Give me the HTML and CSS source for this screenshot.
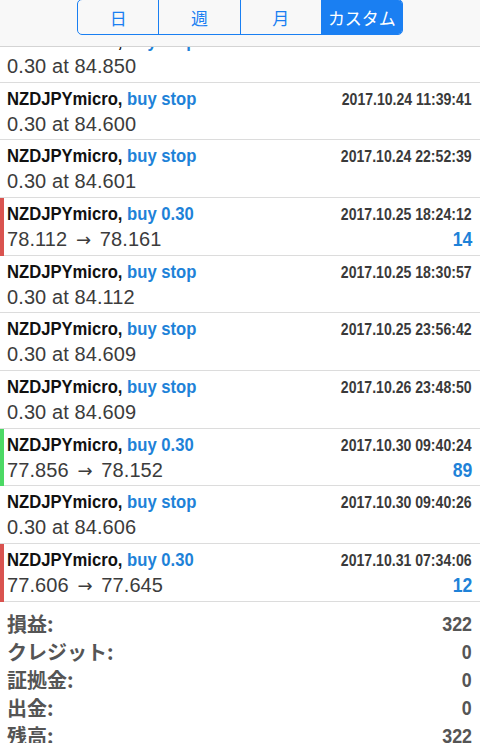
FILE: index.html
```html
<!DOCTYPE html>
<html lang="ja">
<head>
    <meta charset="UTF-8">
    <meta name="viewport" content="width=device-width, initial-scale=1">
    <title>履歴</title>
    <link rel="stylesheet" href="styles.css">
</head>

<body>
    <div class="topbar">
        <div class="segments">
            <span class="seg">日</span>
            <span class="seg">週</span>
            <span class="seg">月</span>
            <span class="seg active">カスタム</span>
        </div>
    </div>

    <div class="list">
        <div class="row">
            <div class="line"><span class="sym">NZDJPYmicro, <span class="op">buy stop</span></span><span class="time">2017.10.24 09:12:30</span></div>
            <div class="line"><span class="sub">0.30 at 84.850</span></div>
        </div>
        <div class="row">
            <div class="line"><span class="sym">NZDJPYmicro, <span class="op">buy stop</span></span><span class="time">2017.10.24 11:39:41</span></div>
            <div class="line"><span class="sub">0.30 at 84.600</span></div>
        </div>
        <div class="row">
            <div class="line"><span class="sym">NZDJPYmicro, <span class="op">buy stop</span></span><span class="time">2017.10.24 22:52:39</span></div>
            <div class="line"><span class="sub">0.30 at 84.601</span></div>
        </div>
        <div class="row loss">
            <div class="line"><span class="sym">NZDJPYmicro, <span class="op">buy 0.30</span></span><span class="time">2017.10.25 18:24:12</span></div>
            <div class="line"><span class="sub">78.112 <span class="arrow">→</span> 78.161</span><span class="profit">14</span></div>
        </div>
        <div class="row">
            <div class="line"><span class="sym">NZDJPYmicro, <span class="op">buy stop</span></span><span class="time">2017.10.25 18:30:57</span></div>
            <div class="line"><span class="sub">0.30 at 84.112</span></div>
        </div>
        <div class="row">
            <div class="line"><span class="sym">NZDJPYmicro, <span class="op">buy stop</span></span><span class="time">2017.10.25 23:56:42</span></div>
            <div class="line"><span class="sub">0.30 at 84.609</span></div>
        </div>
        <div class="row">
            <div class="line"><span class="sym">NZDJPYmicro, <span class="op">buy stop</span></span><span class="time">2017.10.26 23:48:50</span></div>
            <div class="line"><span class="sub">0.30 at 84.609</span></div>
        </div>
        <div class="row gain">
            <div class="line"><span class="sym">NZDJPYmicro, <span class="op">buy 0.30</span></span><span class="time">2017.10.30 09:40:24</span></div>
            <div class="line"><span class="sub">77.856 <span class="arrow">→</span> 78.152</span><span class="profit">89</span></div>
        </div>
        <div class="row">
            <div class="line"><span class="sym">NZDJPYmicro, <span class="op">buy stop</span></span><span class="time">2017.10.30 09:40:26</span></div>
            <div class="line"><span class="sub">0.30 at 84.606</span></div>
        </div>
        <div class="row loss">
            <div class="line"><span class="sym">NZDJPYmicro, <span class="op">buy 0.30</span></span><span class="time">2017.10.31 07:34:06</span></div>
            <div class="line"><span class="sub">77.606 <span class="arrow">→</span> 77.645</span><span class="profit">12</span></div>
        </div>
    </div>

    <div class="summary">
        <div class="sum-row"><span class="label">損益:</span><span class="value">322</span></div>
        <div class="sum-row"><span class="label">クレジット:</span><span class="value">0</span></div>
        <div class="sum-row"><span class="label">証拠金:</span><span class="value">0</span></div>
        <div class="sum-row"><span class="label">出金:</span><span class="value">0</span></div>
        <div class="sum-row"><span class="label">残高:</span><span class="value">322</span></div>
    </div>
</body>
</html>
```

FILE: styles.css
```css
body {
    margin: 0;
    padding: 25px 0 0;
    background: #fff;
    font-family: "Liberation Sans", Arial, "Noto Sans CJK JP", sans-serif;
    color: #333;
}

.topbar {
    position: fixed;
    top: 0;
    left: 0;
    right: 0;
    height: 46px;
    background: #f8f8f8;
    border-bottom: 1px solid #d4d4d4;
    z-index: 10;
}

.segments {
    display: flex;
    width: 326px;
    height: 36px;
    margin: -1px auto 0;
    border: 1px solid #1a7ff2;
    border-radius: 5px;
    box-sizing: border-box;
    overflow: hidden;
}

.seg {
    flex: 1;
    display: flex;
    align-items: center;
    justify-content: center;
    color: #1a7ff2;
    font-family: "Noto Sans CJK JP", sans-serif;
    font-size: 17px;
    border-left: 1px solid #1a7ff2;
}

.seg:first-child {
    border-left: none;
}

.seg.active {
    background: #1a7ff2;
    color: #fff;
}

.row {
    height: 57.67px;
    box-sizing: border-box;
    padding: 4px 8px 0 7px;
    border-bottom: 1px solid #dcdcdc;
    position: relative;
}

.row.loss::before,
.row.gain::before {
    content: "";
    position: absolute;
    left: 0;
    top: 0;
    bottom: -1px;
    width: 4px;
    background: #d9534f;
}

.row.gain::before {
    background: #4cd964;
}

.line {
    display: flex;
    justify-content: space-between;
    align-items: baseline;
}

/* the app font is a condensed bold, squeeze Liberation to match */
.sym {
    display: inline-block;
    font-weight: bold;
    font-size: 19px;
    line-height: 24px;
    color: #111;
    transform: scaleX(0.875);
    transform-origin: left center;
    white-space: nowrap;
}

.op {
    color: #1e82d8;
}

.time {
    display: inline-block;
    font-weight: bold;
    font-size: 16px;
    color: #3a3a3a;
    transform: scaleX(0.88);
    transform-origin: right center;
    white-space: nowrap;
}

.sub {
    font-size: 20px;
    letter-spacing: 0.1px;
    line-height: 27px;
    color: #3c3c3c;
}

.arrow {
    font-family: "DejaVu Sans", sans-serif;
    font-size: 18px;
    margin: 0 3px;
}

.profit {
    display: inline-block;
    font-weight: bold;
    font-size: 20px;
    color: #1e82d8;
    transform: scaleX(0.88);
    transform-origin: right center;
}

.summary {
    padding: 8px 8px 0 7px;
}

.sum-row {
    display: flex;
    justify-content: space-between;
    align-items: center;
    height: 28px;
}

.label {
    font-family: "Noto Sans CJK JP", sans-serif;
    font-weight: bold;
    font-size: 20px;
    line-height: 28px;
    color: #555;
}

.value {
    display: inline-block;
    font-weight: bold;
    font-size: 21px;
    line-height: 28px;
    color: #555;
    transform: scaleX(0.85);
    transform-origin: right center;
}
```
